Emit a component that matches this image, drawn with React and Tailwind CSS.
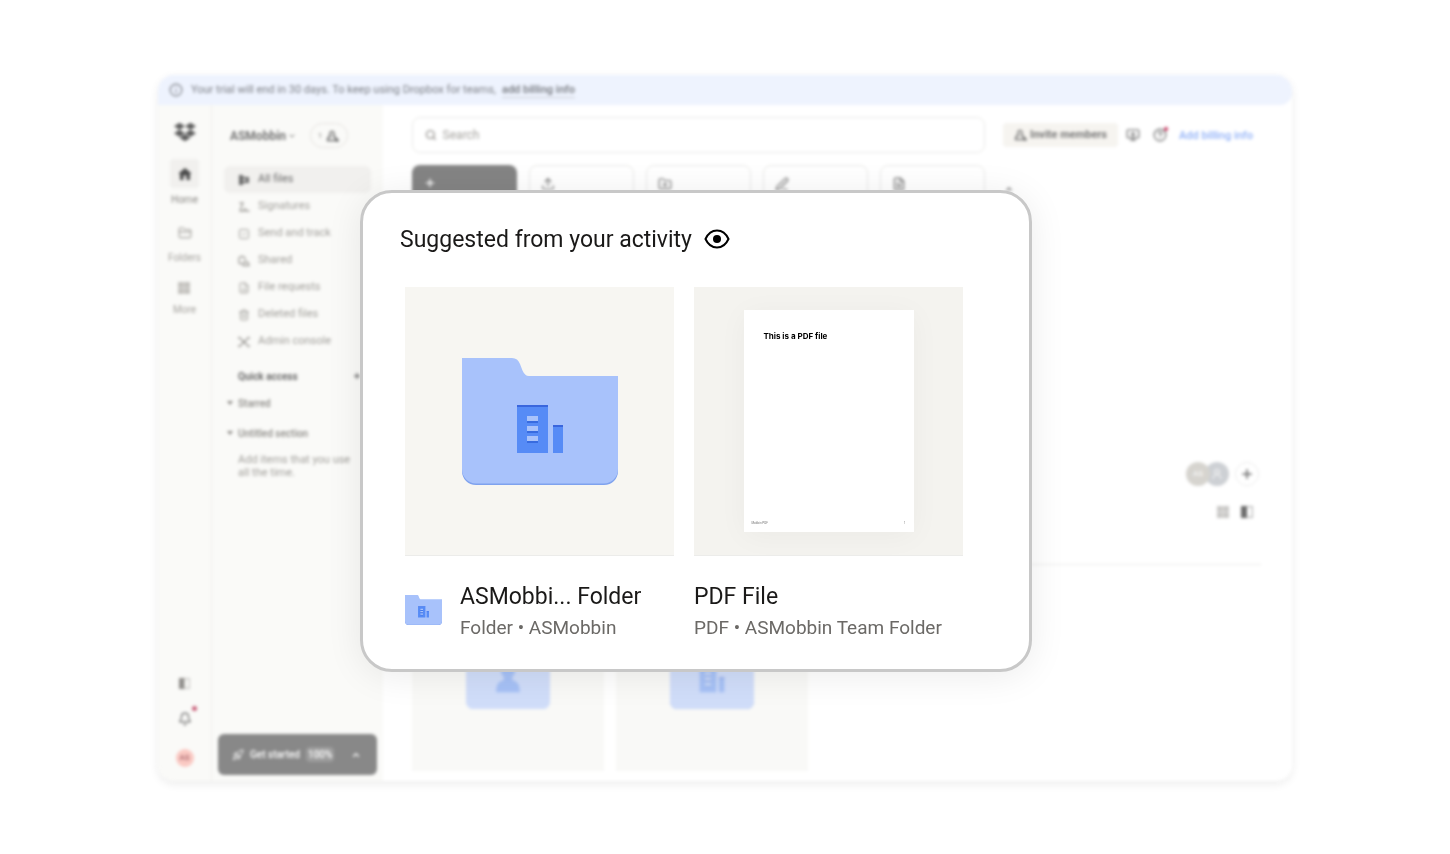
import React from 'react';
import { FaDropbox } from 'react-icons/fa6';
import {
  Bell,
  ChevronDown,
  ChevronUp,
  CircleHelp,
  FileChartColumn,
  FileText,
  FolderPlus,
  FolderClosed,
  Info,
  MonitorDown,
  PenLine,
  Plus,
  Rocket,
  Search,
  SquareCheck,
  Trash2,
  Upload,
  UserRound,
} from 'lucide-react';

const navItems = [
  { label: 'All files', icon: AllFilesIcon, active: true },
  { label: 'Signatures', icon: SignatureIcon },
  { label: 'Send and track', icon: SquareCheck },
  { label: 'Shared', icon: SharedIcon },
  { label: 'File requests', icon: FileChartColumn },
  { label: 'Deleted files', icon: Trash2 },
  { label: 'Admin console', icon: ConsoleIcon },
];

const actions = [
  { label: 'Upload', icon: Upload },
  { label: 'Create folder', icon: FolderPlus },
  { label: 'Edit', icon: PenLine },
  { label: 'Get document', icon: FileText },
];

function AllFilesIcon({ className }) {
  return (
    <svg viewBox="0 0 12 12" className={className} fill="currentColor" aria-hidden="true">
      <path d="M1 1h4v2h6v6H5v2H1z" />
      <path d="M5 5h3v2H5z" fill="#f1f0ee" />
    </svg>
  );
}

function SignatureIcon({ className }) {
  return (
    <svg viewBox="0 0 12 12" className={className} fill="none" stroke="currentColor" strokeWidth="1.3" aria-hidden="true">
      <path d="M1.500 2h3.500L2 9.500M1.500 10h4.500c0-3 2-3 2 0h3.500" />
    </svg>
  );
}

function SharedIcon({ className }) {
  return (
    <svg viewBox="0 0 12 12" className={className} fill="none" stroke="currentColor" strokeWidth="1.3" aria-hidden="true">
      <path d="M1 8.500V3l2-1.500h2L7 3v2M1 8.500h3M5 10.500c0-5 5.500-5 6 0z" />
    </svg>
  );
}

function ConsoleIcon({ className }) {
  return (
    <svg viewBox="0 0 12 12" className={className} fill="none" stroke="currentColor" strokeWidth="1.4" aria-hidden="true">
      <path d="M1 1l10 10M11 1L1 11M4 6h4M1 3V1M11 3V1M1 9v2M11 9v2" />
    </svg>
  );
}

function PersonIcon({ className }) {
  return (
    <svg viewBox="0 0 14 12" className={className} fill="none" stroke="currentColor" strokeWidth="1.4" aria-hidden="true">
      <path d="M6 1.500c2.500 0 2.500 3.500 1.500 4.500 2 .8 2.500 2 2.500 4.500H1.500c0-2.500.8-3.700 3-4.500-1-1-1-4.500 1.500-4.500zM11 8v4M9 10.500h4" />
    </svg>
  );
}

function GridIcon({ className }) {
  return (
    <svg viewBox="0 0 12 12" className={className} fill="currentColor" aria-hidden="true">
      <path d="M0 0h5.800v5.800H0zM6.200 0H12v5.800H6.200zM0 6.200h5.800V12H0zM6.200 6.200H12V12H6.200z" />
    </svg>
  );
}

function PanelIcon({ className }) {
  return (
    <svg viewBox="0 0 12 12" className={className} aria-hidden="true">
      <path d="M.700.700h10.600v10.600H.700z" fill="none" stroke="currentColor" strokeWidth="1.200" opacity=".5" />
      <path d="M0 0h6v12H0z" fill="currentColor" />
    </svg>
  );
}

function HomeIcon({ className }) {
  return (
    <svg viewBox="0 0 14 14" className={className} fill="currentColor" aria-hidden="true">
      <path d="M7 1 1 6v1h1v6h3.500V8.500h3V13H12V7h1V6z" />
    </svg>
  );
}

function CaretIcon({ className }) {
  return (
    <svg viewBox="0 0 8 8" className={className} fill="currentColor" aria-hidden="true">
      <path d="M1 2h6L4 6z" />
    </svg>
  );
}

function EyeIcon({ className }) {
  return (
    <svg viewBox="0 0 26 20" className={className} aria-hidden="true">
      <path
        d="M1.500 10C4 4.500 8.500 1.500 13 1.500S22 4.500 24.500 10C22 15.500 17.500 18.500 13 18.500S4 15.500 1.500 10z"
        fill="none"
        stroke="currentColor"
        strokeWidth="2"
      />
      <circle cx="13" cy="10" r="4" fill="currentColor" />
    </svg>
  );
}

function TeamFolder({ className }) {
  return (
    <svg viewBox="0 0 156 127" className={className} aria-hidden="true">
      <path d="M0 90v23c0 8 6 14 14 14h128c8 0 14-6 14-14V90z" fill="#7fa2ee" />
      <path d="M0 0h50c4 0 6.500 2 8 6l2.500 6.500c1.500 3.500 3.500 5.500 6.500 5.500h89v93c0 8-6 14.500-14 14.500H14c-8 0-14-6.500-14-14.500z" fill="#a8c2fb" />
      <path d="M55 47h31v48H55zM91 67h10v28H91z" fill="#568bf6" />
      <path d="M55 47h31v2H55zM91 67h10v2H91z" fill="#3a66dd" />
      <path d="M65 62h11v3H65zM65 72h11v3H65zM65 82h11v3H65z" fill="#376be0" />
      <path d="M65 58h11v5H65zM65 68h11v5H65zM65 78h11v5H65z" fill="#a8c2fb" />
    </svg>
  );
}

function MemberFolder({ className }) {
  return (
    <svg viewBox="0 0 156 127" className={className} aria-hidden="true">
      <path d="M0 0h50c4 0 6.500 2 8 6l2.500 6.500c1.500 3.500 3.500 5.500 6.500 5.500h89v95c0 8-6 14-14 14H14c-8 0-14-6-14-14z" fill="#a8c2fb" />
      <circle cx="78" cy="56" r="13" fill="#568bf6" />
      <path d="M70 60h16v13c9 2 14 7 14 22H56c0-15 5-20 14-22z" fill="#568bf6" />
    </svg>
  );
}

function Rail() {
  return (
    <nav className="flex w-[54px] shrink-0 flex-col items-center border-r border-[#f0efed] pt-4 pb-[14px] text-[10px] leading-4 text-[#a5a39f]">
      <FaDropbox className="h-[22px] w-[22px] text-[#5a5a5a]" />
      <a href="#home" className="mt-4 flex flex-col items-center text-[#8a8885]">
        <span className="flex h-[29px] w-[29px] items-center justify-center rounded bg-[#f1f0ee]">
          <HomeIcon className="h-[14px] w-[14px] text-[#4a4a4a]" />
        </span>
        <span className="mt-1">Home</span>
      </a>
      <a href="#folders" className="mt-[18px] flex flex-col items-center">
        <FolderClosed className="h-[14px] w-[14px]" />
        <span className="mt-[10px]">Folders</span>
      </a>
      <a href="#more" className="mt-4 flex flex-col items-center">
        <GridIcon className="h-3 w-3 text-[#c4c2be]" />
        <span className="mt-2">More</span>
      </a>
      <div className="mt-auto flex flex-col items-center gap-[23px]">
        <button type="button" aria-label="Toggle sidebar">
          <PanelIcon className="h-[11px] w-[11px] text-[#8f8d8a]" />
        </button>
        <button type="button" aria-label="Notifications" className="relative">
          <Bell className="h-[14px] w-[14px] text-[#6a6a6a]" />
          <span className="absolute -top-[6px] -right-[5px] h-[5px] w-[5px] rounded-full bg-[#c9607a]" />
        </button>
        <button type="button" aria-label="Account" className="flex h-[18px] w-[18px] items-center justify-center rounded-full bg-[#fac9c3] text-[8px] text-[#96515a]">
          AS
        </button>
      </div>
    </nav>
  );
}

function Sidebar() {
  return (
    <aside className="flex w-[171px] shrink-0 flex-col px-[6px] pb-[6px] text-[11px] text-[#a09e9a]">
      <div className="flex h-[61px] items-center gap-[14px] pl-3">
        <button type="button" className="flex items-center gap-[2px] text-xs font-semibold text-[#6a6a6a]">
          ASMobbin
          <ChevronDown className="h-2 w-2" strokeWidth={3} />
        </button>
        <button type="button" aria-label="Members" className="flex h-[25px] w-[38px] items-center justify-center gap-1 rounded-full border border-[#e6e4e1] text-[8px] text-[#8a8885]">
          1
          <PersonIcon className="h-3 w-[14px] text-[#6a6a6a]" />
        </button>
      </div>
      <ul className="px-[6px]">
        {navItems.map(({ label, icon: Icon, active }) => (
          <li key={label}>
            <a
              href="#files"
              className={
                active
                  ? 'flex h-[27px] items-center gap-2 rounded-md bg-[#f1f0ee] pl-[14px] text-[#6a6a6a]'
                  : 'flex h-[27px] items-center gap-2 pl-[14px]'
              }
            >
              <Icon className="h-3 w-3" />
              {label}
            </a>
          </li>
        ))}
      </ul>
      <div className="mt-[9px] flex h-6 items-center justify-between pr-4 pl-5 text-[10px] font-bold text-[#6a6a6a]">
        Quick access
        <Plus className="h-2 w-2" strokeWidth={4} />
      </div>
      <button type="button" className="mt-[3px] flex h-6 items-center gap-1 pl-2 text-[10px] font-medium text-[#8c8a86]">
        <CaretIcon className="h-2 w-2" />
        Starred
      </button>
      <button type="button" className="mt-[6px] flex h-6 items-center gap-1 pl-2 text-[10px] font-medium text-[#8c8a86]">
        <CaretIcon className="h-2 w-2" />
        Untitled section
      </button>
      <p className="mt-2 pr-4 pl-5 leading-[13px]">Add items that you use all the time.</p>
      <button type="button" className="mt-auto flex h-[41px] items-center rounded-md bg-[#888] px-[14px] text-[10px] font-medium text-white">
        <Rocket className="h-3 w-3" />
        <span className="ml-[6px]">Get started</span>
        <span className="ml-[6px] rounded-sm bg-[#9c9c9c] px-[2px]">100%</span>
        <ChevronUp className="mr-[2px] ml-auto h-[10px] w-[10px]" strokeWidth={3} />
      </button>
    </aside>
  );
}

function MainPane() {
  return (
    <main className="flex min-w-0 flex-1 flex-col bg-white pt-3 pr-[31px] pb-[10px] pl-[29px]">
      <div className="flex items-center">
        <label className="flex h-9 w-[573px] items-center gap-[6px] rounded-lg border border-[#e9e9e7] px-3">
          <Search className="h-3 w-3 text-[#9a9894]" strokeWidth={3} />
          <input type="search" aria-label="Search" placeholder="Search" className="w-full text-xs outline-none placeholder:text-[#a5a39f]" />
        </label>
        <button type="button" className="ml-[18px] flex h-6 w-[115px] shrink-0 items-center justify-center gap-[2px] rounded bg-[#f6f4f0] text-[11px] font-bold text-[#777]">
          <PersonIcon className="h-3 w-[14px]" />
          Invite members
        </button>
        <button type="button" aria-label="Get the app" className="ml-2">
          <MonitorDown className="h-[14px] w-[14px] text-[#6a6a6a]" />
        </button>
        <button type="button" aria-label="Help" className="relative ml-[13px]">
          <CircleHelp className="h-[14px] w-[14px] text-[#6a6a6a]" />
          <span className="absolute -top-px -right-px h-1 w-1 rounded-full bg-[#c8325c]" />
        </button>
        <a href="#billing" className="mr-2 ml-auto pt-[3px] text-[11px] font-medium whitespace-nowrap text-[#8fb0f8]">
          Add billing info
        </a>
      </div>
      <div className="mt-3 flex gap-3">
        <button type="button" aria-label="Create" className="flex h-[60px] w-[105px] items-start rounded-lg bg-[#848484] p-3 text-white">
          <Plus className="h-3 w-3" strokeWidth={3} />
        </button>
        {actions.map(({ label, icon: Icon }) => (
          <button key={label} type="button" aria-label={label} className="flex h-[60px] w-[105px] items-start rounded-lg border border-[#e9e9e7] p-[11px] text-[#777]">
            <Icon className="h-[14px] w-[14px]" />
          </button>
        ))}
        <button type="button" aria-label="More actions" className="ml-2 flex h-[60px] items-start pt-5 text-[#777]">
          <ChevronUp className="h-2 w-2" strokeWidth={4} />
        </button>
      </div>
      <div className="mt-auto flex items-center justify-end pr-[2px]">
        <span className="z-10 flex h-6 w-6 items-center justify-center rounded-full bg-[#d6d4cf] text-[8px] text-white">AS</span>
        <span className="-ml-[5px] flex h-6 w-6 items-center justify-center rounded-full bg-[#cdd0d4] text-white">
          <UserRound className="h-3 w-3" />
        </span>
        <button type="button" aria-label="Add member" className="ml-[6px] flex h-6 w-6 items-center justify-center rounded-full border border-[#ededed]">
          <Plus className="h-[14px] w-[14px] text-[#777]" strokeWidth={3} />
        </button>
      </div>
      <div className="mt-5 flex justify-end gap-3 pr-2">
        <button type="button" aria-label="Grid view">
          <GridIcon className="h-3 w-3 text-[#c9c8c6]" />
        </button>
        <button type="button" aria-label="Details pane">
          <PanelIcon className="h-3 w-3 text-[#6a6a6a]" />
        </button>
      </div>
      <hr className="mt-[46px] border-[#ececea]" />
      <div className="mt-[14px] flex gap-3">
        <div className="flex h-48 w-48 items-center justify-center bg-[#f9f9f7]">
          <MemberFolder className="w-[84px] opacity-50" />
        </div>
        <div className="flex h-48 w-48 items-center justify-center bg-[#f9f9f7]">
          <TeamFolder className="w-[84px] opacity-50" />
        </div>
      </div>
    </main>
  );
}

function SuggestedCard() {
  return (
    <section className="absolute top-[115px] left-[202px] w-[672px] rounded-[32px] border-3 border-[#c8c8c8] bg-white pt-[30px] pr-[66px] pb-[26px] pl-[42px] text-[#1a1918] shadow-[0_4px_36px_rgba(0,0,0,0.08)]">
      <div className="-ml-[5px] flex h-8 items-center gap-3">
        <h2 className="pt-[3px] text-[23px]">Suggested from your activity</h2>
        <button type="button" aria-label="Hide suggestions">
          <EyeIcon className="h-5 w-[26px] text-black" />
        </button>
      </div>
      <div className="mt-8 grid grid-cols-2 gap-5">
        <article>
          <div className="flex aspect-square items-center justify-center border-b border-[#ececea] bg-[#f7f6f2]">
            <TeamFolder className="w-[156px]" />
          </div>
          <div className="mt-[25px] flex items-start gap-[18px]">
            <TeamFolder className="mt-[14px] w-[37px]" />
            <div>
              <h3 className="text-[23px] leading-8">ASMobbi... Folder</h3>
              <p className="text-[19px] leading-[30px] text-[#6b6966]">Folder • ASMobbin</p>
            </div>
          </div>
        </article>
        <article>
          <div className="flex aspect-square items-center justify-center border-b border-[#ececea] bg-[#f4f3ef]">
            <div className="flex h-[222px] w-[170px] flex-col bg-white px-[6px] pt-5 pb-[6px] shadow-[0_4px_28px_rgba(0,0,0,0.04)]">
              <p className="pl-[14px] font-['Inter',sans-serif] text-[8px] leading-3 font-bold text-black">This is a PDF file</p>
              <div className="mt-auto flex justify-between px-[2px] text-[3px] leading-[6px] text-[#777]">
                <span>Mobbin PDF</span>
                <span>1</span>
              </div>
            </div>
          </div>
          <div className="mt-[25px] whitespace-nowrap">
            <h3 className="text-[23px] leading-8">PDF File</h3>
            <p className="text-[19px] leading-[30px] text-[#6b6966]">PDF • ASMobbin Team Folder</p>
          </div>
        </article>
      </div>
    </section>
  );
}

export default function App() {
  return (
    <div className="min-h-screen bg-white px-[158px] py-[75px] font-['Roboto',sans-serif]">
      <div className="relative">
        <div className="blur-[1px]">
          <div className="flex min-h-[706px] flex-col overflow-hidden rounded-2xl bg-[#fafaf8] shadow-[0_3px_10px_rgba(0,0,0,0.08)] blur-[1px]">
            <div className="bg-white">
              <div className="flex h-[30px] items-center rounded-br-xl bg-[#eef3fe] px-[11px] text-[11px] text-[#7c7f85]">
                <Info className="h-[14px] w-[14px]" />
                <span className="ml-2">Your trial will end in 30 days. To keep using Dropbox for teams,</span>
                <a href="#billing" className="ml-[6px] font-semibold underline decoration-[#c9ccd3] underline-offset-4">
                  add billing info
                </a>
              </div>
            </div>
            <div className="flex flex-1">
              <Rail />
              <Sidebar />
              <MainPane />
            </div>
          </div>
        </div>
        <SuggestedCard />
      </div>
    </div>
  );
}
